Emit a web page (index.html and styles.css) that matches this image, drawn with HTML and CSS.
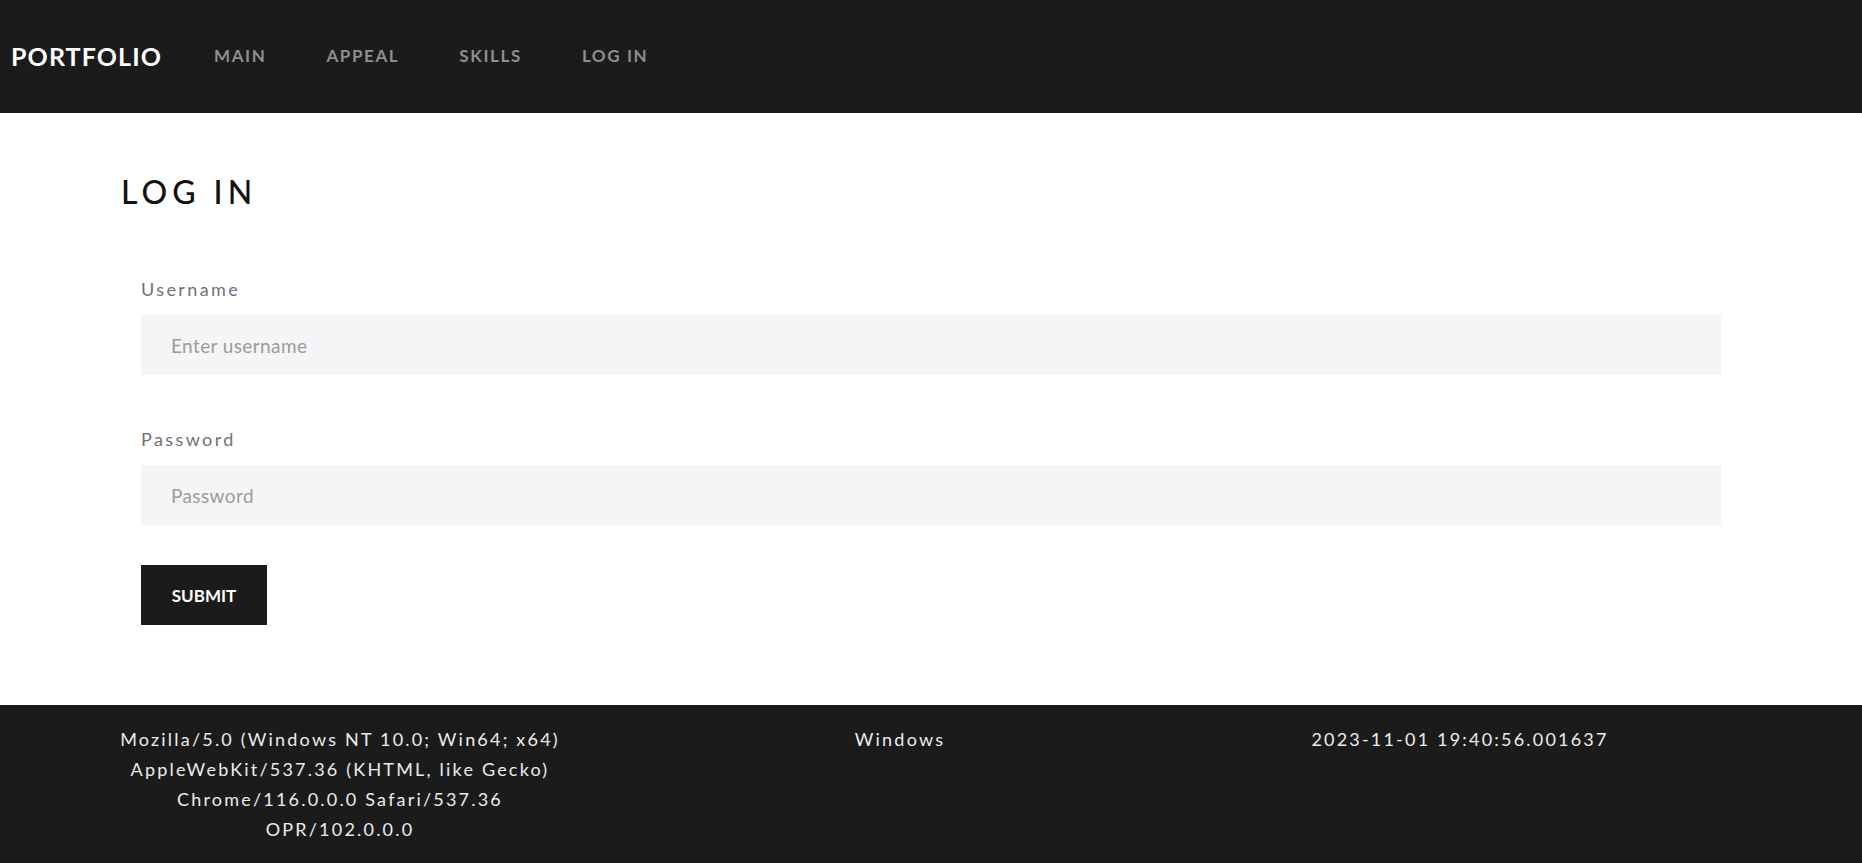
FILE: index.html
```html
<!DOCTYPE html>
<html lang="en">
<head>
<meta charset="utf-8">
<title>Portfolio - Log in</title>
<link rel="stylesheet" href="styles.css">
</head>
<body>
<nav class="navbar">
  <a class="brand" href="#">PORTFOLIO</a>
  <ul class="nav-links">
    <li><a href="#">MAIN</a></li>
    <li><a href="#">APPEAL</a></li>
    <li><a href="#">SKILLS</a></li>
    <li><a href="#">LOG IN</a></li>
  </ul>
</nav>
<main class="content">
  <h1 class="page-title">LOG IN</h1>
  <form class="login-form">
    <div class="field">
      <label class="field-label" for="username">Username</label>
      <input class="field-input" id="username" type="text" placeholder="Enter username">
    </div>
    <div class="field">
      <label class="field-label" for="password">Password</label>
      <input class="field-input" id="password" type="password" placeholder="Password">
    </div>
    <button class="submit-btn" type="submit">SUBMIT</button>
  </form>
</main>
<footer class="footer">
  <div class="footer-col">Mozilla/5.0 (Windows NT 10.0; Win64; x64) AppleWebKit/537.36 (KHTML, like Gecko) Chrome/116.0.0.0 Safari/537.36 OPR/102.0.0.0</div>
  <div class="footer-col">Windows</div>
  <div class="footer-col">2023-11-01 19:40:56.001637</div>
</footer>
</body>
</html>
```
FILE: styles.css
```css
* { box-sizing: border-box; }
html, body { margin: 0; padding: 0; }
body {
  font-family: "Lato", "Open Sans", sans-serif;
  background: #ffffff;
  color: #111;
}
.navbar {
  height: 113px;
  background: #1b1b1b;
  display: flex;
  align-items: center;
  padding: 0 0 2px 11px;
}
.brand {
  color: #ffffff;
  text-decoration: none;
  font-size: 25px;
  font-weight: 700;
  letter-spacing: 1.1px;
}
.nav-links {
  list-style: none;
  display: flex;
  margin: 0 0 0 22px;
  padding: 0;
}
.nav-links a {
  display: block;
  padding: 0 30px;
  color: #8e8e8e;
  text-decoration: none;
  font-size: 17px;
  font-weight: 700;
  letter-spacing: 1.6px;
}
.content {
  padding: 60px 121px 80px;
}
.page-title {
  margin: 0 0 65px;
  font-size: 32px;
  line-height: 38px;
  font-weight: 500;
  letter-spacing: 5px;
  color: #111;
}
.login-form {
  padding: 0 20px;
}
.field {
  display: flex;
  flex-direction: column;
  margin-bottom: 51px;
}
.field:last-of-type { margin-bottom: 40px; }
.field-label {
  font-size: 18px;
  line-height: 27px;
  font-weight: 400;
  letter-spacing: 2.4px;
  color: #70707a;
  margin-bottom: 12px;
}
.field-input {
  height: 60px;
  border: none;
  background: #f5f5f7;
  padding: 0 30px;
  font-family: inherit;
  font-size: 19px;
  font-weight: 400;
  letter-spacing: 0.4px;
  color: #333;
  outline: none;
}
.field-input::placeholder { color: #9c9c9c; }
.submit-btn {
  display: block;
  width: 126px;
  height: 60px;
  border: none;
  background: #1b1b1b;
  color: #ffffff;
  font-family: inherit;
  font-size: 17px;
  font-weight: 700;
  padding: 0;
}
.footer {
  background: #1b1b1b;
  color: #ececec;
  display: grid;
  grid-template-columns: repeat(3, 560px);
  padding: 19px 0 11px 60px;
  min-height: 158px;
  font-size: 18px;
  line-height: 30px;
  letter-spacing: 2.2px;
}
.footer-col {
  text-align: center;
  padding: 0 50px;
}
```
